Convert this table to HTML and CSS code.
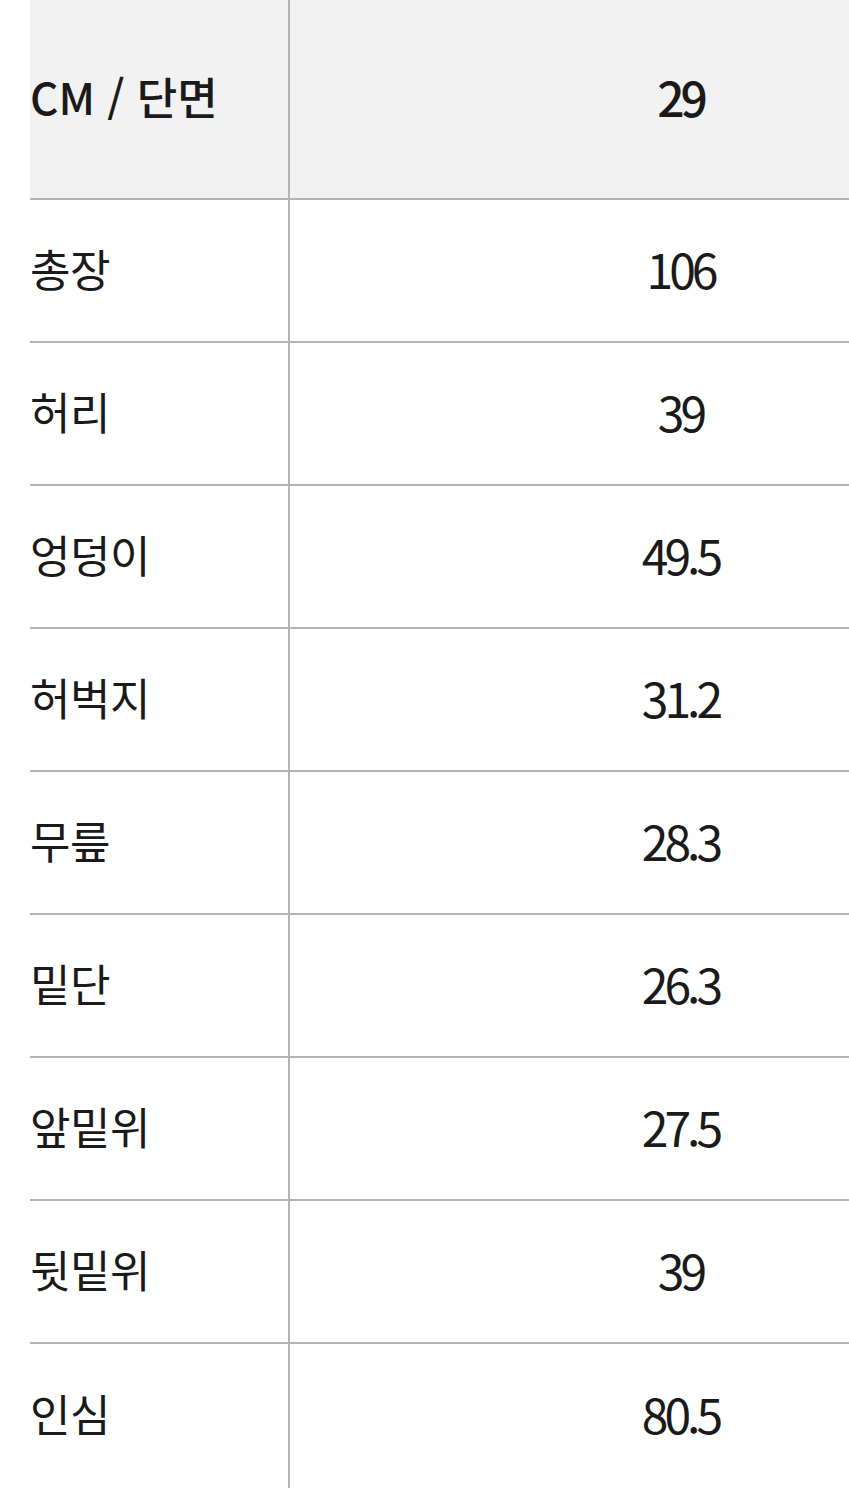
FILE: index.html
```html
<!DOCTYPE html>
<html lang="ko">
<head>
<meta charset="utf-8">
<title>사이즈</title>
<link rel="stylesheet" href="styles.css">
</head>
<body>
<div class="sheet">
  <table class="size-table">
    <tr class="head"><th>CM / 단면</th><td>29</td></tr>
    <tr><th>총장</th><td>106</td></tr>
    <tr><th>허리</th><td>39</td></tr>
    <tr><th>엉덩이</th><td>49.5</td></tr>
    <tr><th>허벅지</th><td>31.2</td></tr>
    <tr><th>무릎</th><td>28.3</td></tr>
    <tr><th>밑단</th><td>26.3</td></tr>
    <tr><th>앞밑위</th><td>27.5</td></tr>
    <tr><th>뒷밑위</th><td>39</td></tr>
    <tr class="last"><th>인심</th><td>80.5</td></tr>
  </table>
</div>
</body>
</html>
```

FILE: styles.css
```css
html, body {
  margin: 0;
  padding: 0;
  background: #ffffff;
  overflow: hidden;
}
.sheet {
  width: 849px;
  height: 1500px;
  overflow: hidden;
  padding-left: 30px;
  box-sizing: border-box;
}
.size-table {
  border-collapse: collapse;
  width: 1041px;
  table-layout: fixed;
  font-family: "Noto Sans CJK KR", "Noto Sans", sans-serif;
  color: #1a1a1a;
}
.size-table th,
.size-table td {
  height: 135px;
  padding: 0 0 6px 0;
  border-bottom: 2px solid #b4b4b4;
  vertical-align: middle;
  font-weight: 400;
}
.size-table th {
  width: 258px;
  text-align: left;
  font-size: 44px;
  letter-spacing: -0.5px;
  border-right: 2px solid #b4b4b4;
}
.size-table td {
  text-align: center;
  font-size: 48px;
  letter-spacing: -4px;
}
.size-table .head th,
.size-table .head td {
  height: 192px;
  background: #f2f2f2;
  font-weight: 500;
}
.size-table .head th {
  letter-spacing: 0;
}
.size-table .last th,
.size-table .last td {
  border-bottom: none;
  height: 138px;
}
```
